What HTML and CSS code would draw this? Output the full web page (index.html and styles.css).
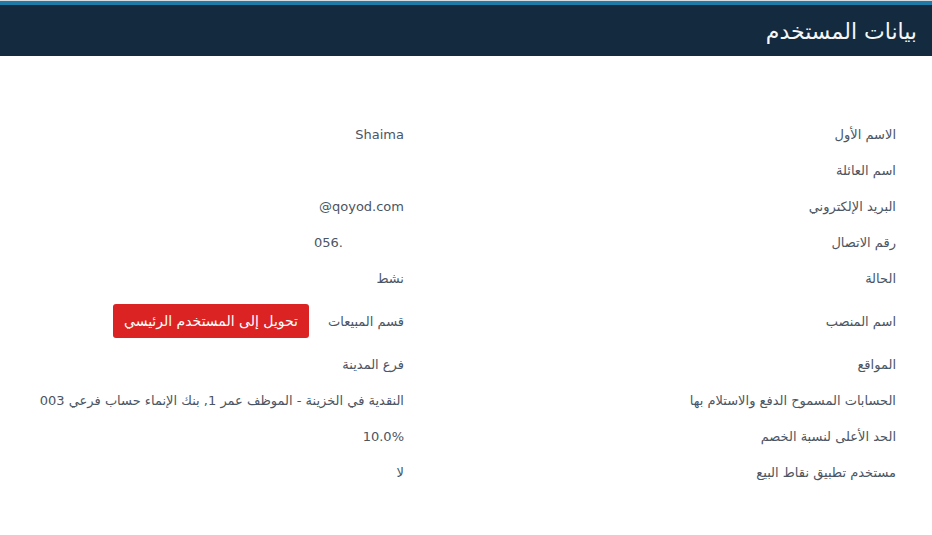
FILE: index.html
```html
<!DOCTYPE html>
<html lang="ar" dir="rtl">
<head>
<meta charset="utf-8">
<link rel="stylesheet" href="styles.css">
</head>
<body>
<div class="header"><h1 class="title">بيانات المستخدم</h1></div>
<div class="details">
  <div class="row"><div class="label">الاسم الأول</div><div class="value">Shaima</div></div>
  <div class="row"><div class="label">اسم العائلة</div><div class="value"></div></div>
  <div class="row"><div class="label">البريد الإلكتروني</div><div class="value"><span dir="ltr">@qoyod.com</span></div></div>
  <div class="row"><div class="label">رقم الاتصال</div><div class="value"><span dir="ltr" class="phone">056.</span></div></div>
  <div class="row"><div class="label">الحالة</div><div class="value">نشط</div></div>
  <div class="row row-tall"><div class="label">اسم المنصب</div><div class="value value-flex"><span>قسم المبيعات</span><button class="btn">تحويل إلى المستخدم الرئيسي</button></div></div>
  <div class="row"><div class="label">المواقع</div><div class="value">فرع المدينة</div></div>
  <div class="row"><div class="label">الحسابات المسموح الدفع والاستلام بها</div><div class="value">النقدية في الخزينة - الموظف عمر 1, بنك الإنماء حساب فرعي 003</div></div>
  <div class="row"><div class="label">الحد الأعلى لنسبة الخصم</div><div class="value">10.0%</div></div>
  <div class="row"><div class="label">مستخدم تطبيق نقاط البيع</div><div class="value">لا</div></div>
</div>
</body>
</html>
```
FILE: styles.css
```css
html, body {
  margin: 0;
  padding: 0;
  background: #ffffff;
  font-family: "DejaVu Sans", "Noto Sans", sans-serif;
}
.header {
  border-top: 1px solid #d8dde2;
  background: #142a3e;
  box-shadow: inset 0 4px 0 #1f7aa8;
  height: 55px;
  display: flex;
  align-items: center;
  padding: 0 15px;
}
.title {
  margin: 6px 0 0 0;
  font-size: 22px;
  font-weight: normal;
  color: #f4f6f8;
}
.details {
  padding: 60px 36px 0 0;
}
.row {
  display: grid;
  grid-template-columns: 476px 1fr;
  column-gap: 16px;
  align-items: center;
  height: 36px;
  font-size: 13px;
  color: #4b5563;
}
.row-tall {
  height: 50px;
}
.phone {
  display: inline-block;
  margin-right: 61px;
}
.value-flex {
  display: flex;
  align-items: center;
  gap: 19px;
}
.btn {
  background: #dc2323;
  color: #ffffff;
  border: none;
  border-radius: 3px;
  font-family: inherit;
  font-size: 14px;
  height: 34px;
  padding: 0 11px;
}
```
